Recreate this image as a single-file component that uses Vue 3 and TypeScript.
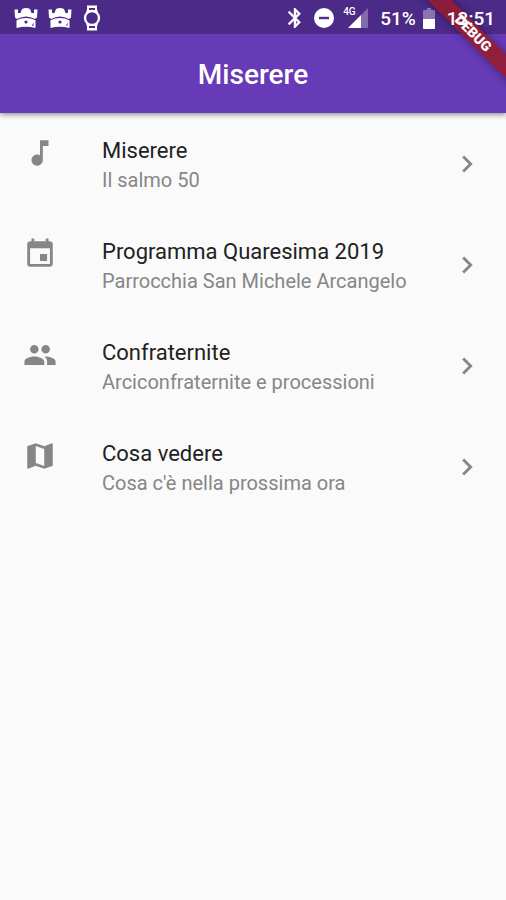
<script setup lang="ts">
interface Entry {
  title: string
  subtitle: string
  icon: string
}

const entries: Entry[] = [
  {
    title: 'Miserere',
    subtitle: 'Il salmo 50',
    icon: 'M12 3v10.55c-.59-.34-1.27-.55-2-.55-2.21 0-4 1.79-4 4s1.79 4 4 4 4-1.79 4-4V7h4V3h-6z',
  },
  {
    title: 'Programma Quaresima 2019',
    subtitle: 'Parrocchia San Michele Arcangelo',
    icon: 'M17 12h-5v5h5v-5zM16 1v2H8V1H6v2H5c-1.11 0-1.99.9-1.99 2L3 19c0 1.1.89 2 2 2h14c1.1 0 2-.9 2-2V5c0-1.1-.9-2-2-2h-1V1h-2zm3 18H5V8h14v11z',
  },
  {
    title: 'Confraternite',
    subtitle: 'Arciconfraternite e processioni',
    icon: 'M16 11c1.66 0 2.99-1.34 2.99-3S17.66 5 16 5c-1.66 0-3 1.34-3 3s1.34 3 3 3zm-8 0c1.66 0 2.99-1.34 2.99-3S9.66 5 8 5C6.34 5 5 6.34 5 8s1.34 3 3 3zm0 2c-2.33 0-7 1.17-7 3.5V19h14v-2.5c0-2.33-4.67-3.5-7-3.5zm8 0c-.29 0-.62.02-.97.05 1.16.84 1.97 1.97 1.97 3.45V19h6v-2.5c0-2.33-4.67-3.5-7-3.5z',
  },
  {
    title: 'Cosa vedere',
    subtitle: "Cosa c'è nella prossima ora",
    icon: 'M20.5 3l-.16.03L15 5.1 9 3 3.36 4.9c-.21.07-.36.25-.36.48V20.5c0 .28.22.5.5.5l.16-.03L9 18.9l6 2.1 5.64-1.9c.21-.07.36-.25.36-.48V3.5c0-.28-.22-.5-.5-.5zM15 19l-6-2.11V5l6 2.11V19z',
  },
]
</script>

<template>
  <div class="screen">
    <header class="top">
      <div class="status">
        <div class="group notices">
          <svg v-for="n in 2" :key="n" class="castle" viewBox="0 0 24 22" aria-hidden="true">
            <path fill="#fff" d="M.5 2.500h3.500v3.500h2.500L8 2q4-2 8 0l1.500 4H20V2.500h3.500l-.5 8-2 1.500Q12 7 3 12l-2-1.500z" />
            <path fill="#fff" d="M2.500 13.300Q12 8.500 21.500 13.300V21Q12 18.500 2.500 21z" />
            <circle cx="12" cy="15" r="1.600" fill="#4527a0" />
            <path fill="none" stroke="#4527a0" stroke-width="1" d="M18.500 19l1-2.500" />
          </svg>
          <svg class="watch" viewBox="0 0 20 26" aria-hidden="true">
            <path fill="#fff" d="M5 .5h10v4l1 3H4l1-3zM4 18.500h12l-1 3v4H5v-4z" />
            <path fill="#4c2a88" d="M7 3h6v2H7zM7 21h6v2H7z" />
            <circle cx="10" cy="13" r="7" fill="#4c2a88" stroke="#fff" stroke-width="2.300" />
          </svg>
        </div>
        <div class="group system">
          <svg class="bluetooth" viewBox="5 2 14 20" aria-hidden="true">
            <path fill="#fff" stroke="#fff" stroke-width=".4" d="M17.710 7.710L12 2h-1v7.590L6.410 5 5 6.410 10.590 12 5 17.590 6.410 19 11 14.410V22h1l5.710-5.710-4.300-4.290 4.300-4.290zM13 5.830l1.880 1.880L13 9.590V5.830zm1.880 10.460L13 18.170v-3.760l1.880 1.880z" />
          </svg>
          <svg class="dnd" viewBox="0 0 20 20" aria-hidden="true">
            <circle cx="10" cy="10" r="10" fill="#fff" />
            <path fill="#4c2a88" d="M5 8.800h10v2.400H5z" />
          </svg>
          <div class="signal">
            <svg viewBox="0 0 20 20" aria-hidden="true">
              <path fill="#fff" fill-opacity=".3" d="M20 0v20h-7V7z" />
              <path fill="#fff" d="M13 7v13H0z" />
            </svg>
            <span class="network">4G</span>
          </div>
          <span class="percent">51%</span>
          <svg class="battery" viewBox="0 0 12 21" aria-hidden="true">
            <path fill="#fff" fill-opacity=".35" d="M4 0h4v2h3a1 1 0 0 1 1 1v8H0V3a1 1 0 0 1 1-1h3z" />
            <path fill="#fff" d="M0 11h12v9a1 1 0 0 1-1 1H1a1 1 0 0 1-1-1z" />
          </svg>
          <time class="clock">13:51</time>
        </div>
      </div>
      <h1 class="heading">Miserere</h1>
    </header>

    <main>
      <ul class="list">
        <li v-for="entry in entries" :key="entry.title">
          <a class="tile" href="#">
            <svg class="icon lead" viewBox="0 0 24 24" aria-hidden="true"><path :d="entry.icon" /></svg>
            <span class="texts">
              <span class="title">{{ entry.title }}</span>
              <span class="subtitle">{{ entry.subtitle }}</span>
            </span>
            <svg class="icon" viewBox="0 0 24 24" aria-hidden="true">
              <path d="M10 6L8.590 7.410 13.170 12l-4.580 4.590L10 18l6-6z" />
            </svg>
          </a>
        </li>
      </ul>
    </main>

    <div class="corner"><span class="ribbon">DEBUG</span></div>
  </div>
</template>

<style>
body {
  background: #fafafa;
}
</style>

<style scoped>
.screen {
  position: relative;
  min-height: 100vh;
  background: #fafafa;
  font-family: Roboto, "Liberation Sans", sans-serif;
}

.top {
  background: #673ab7;
  box-shadow: 0 2px 5px rgba(0, 0, 0, 0.4);
}

.status {
  display: flex;
  justify-content: space-between;
  align-items: center;
  box-sizing: border-box;
  height: 34px;
  padding: 2px 11px 0 14px;
  background: #4c2a88;
  color: #fff;
  font-size: 19px;
  font-weight: 500;
}

.group {
  display: flex;
  align-items: center;
}

.notices {
  gap: 10px;
}

.system {
  position: relative;
  z-index: 2;
}

.castle {
  width: 24px;
  height: 22px;
}

.watch {
  width: 20px;
  height: 26px;
}

.bluetooth {
  width: 14px;
  height: 20px;
  margin-right: 12px;
}

.dnd {
  width: 20px;
  height: 20px;
  margin-right: 14px;
}

.signal {
  position: relative;
  width: 20px;
  height: 20px;
  margin-right: 12px;
}

.signal svg {
  display: block;
  width: 20px;
  height: 20px;
}

.network {
  position: absolute;
  top: -1px;
  left: -5px;
  font-size: 10px;
  line-height: 10px;
}

.percent {
  margin-right: 7px;
}

.battery {
  width: 12px;
  height: 21px;
  margin-right: 12px;
}

.heading {
  margin: 0;
  padding: 24px 0 22px;
  color: #fff;
  font-size: 28px;
  font-weight: 500;
  line-height: 33px;
  text-align: center;
}

.list {
  margin: 0;
  padding: 0;
  list-style: none;
}

.tile {
  display: flex;
  align-items: center;
  height: 101px;
  padding: 0 22px 0 23px;
  color: inherit;
  text-decoration: none;
}

.icon {
  flex: none;
  width: 34px;
  height: 34px;
  fill: #868686;
}

.lead {
  align-self: flex-start;
  margin: 23px 45px 0 0;
}

.texts {
  display: flex;
  flex: 1;
  flex-direction: column;
  gap: 4px;
  min-width: 0;
  padding-top: 2px;
}

.title {
  color: #212121;
  font-size: 22px;
  line-height: 26px;
}

.subtitle {
  color: #868686;
  font-size: 20px;
  line-height: 24px;
}

.corner {
  position: absolute;
  top: 0;
  right: 0;
  z-index: 1;
  width: 100px;
  height: 100px;
  overflow: hidden;
  pointer-events: none;
}

.ribbon {
  position: absolute;
  top: 25px;
  right: -47px;
  width: 160px;
  background: rgba(150, 26, 44, 0.88);
  box-shadow: 0 0 8px rgba(0, 0, 0, 0.4);
  color: #fff;
  font-size: 14px;
  font-weight: 900;
  line-height: 17px;
  text-align: center;
  transform: rotate(45deg);
}
</style>
